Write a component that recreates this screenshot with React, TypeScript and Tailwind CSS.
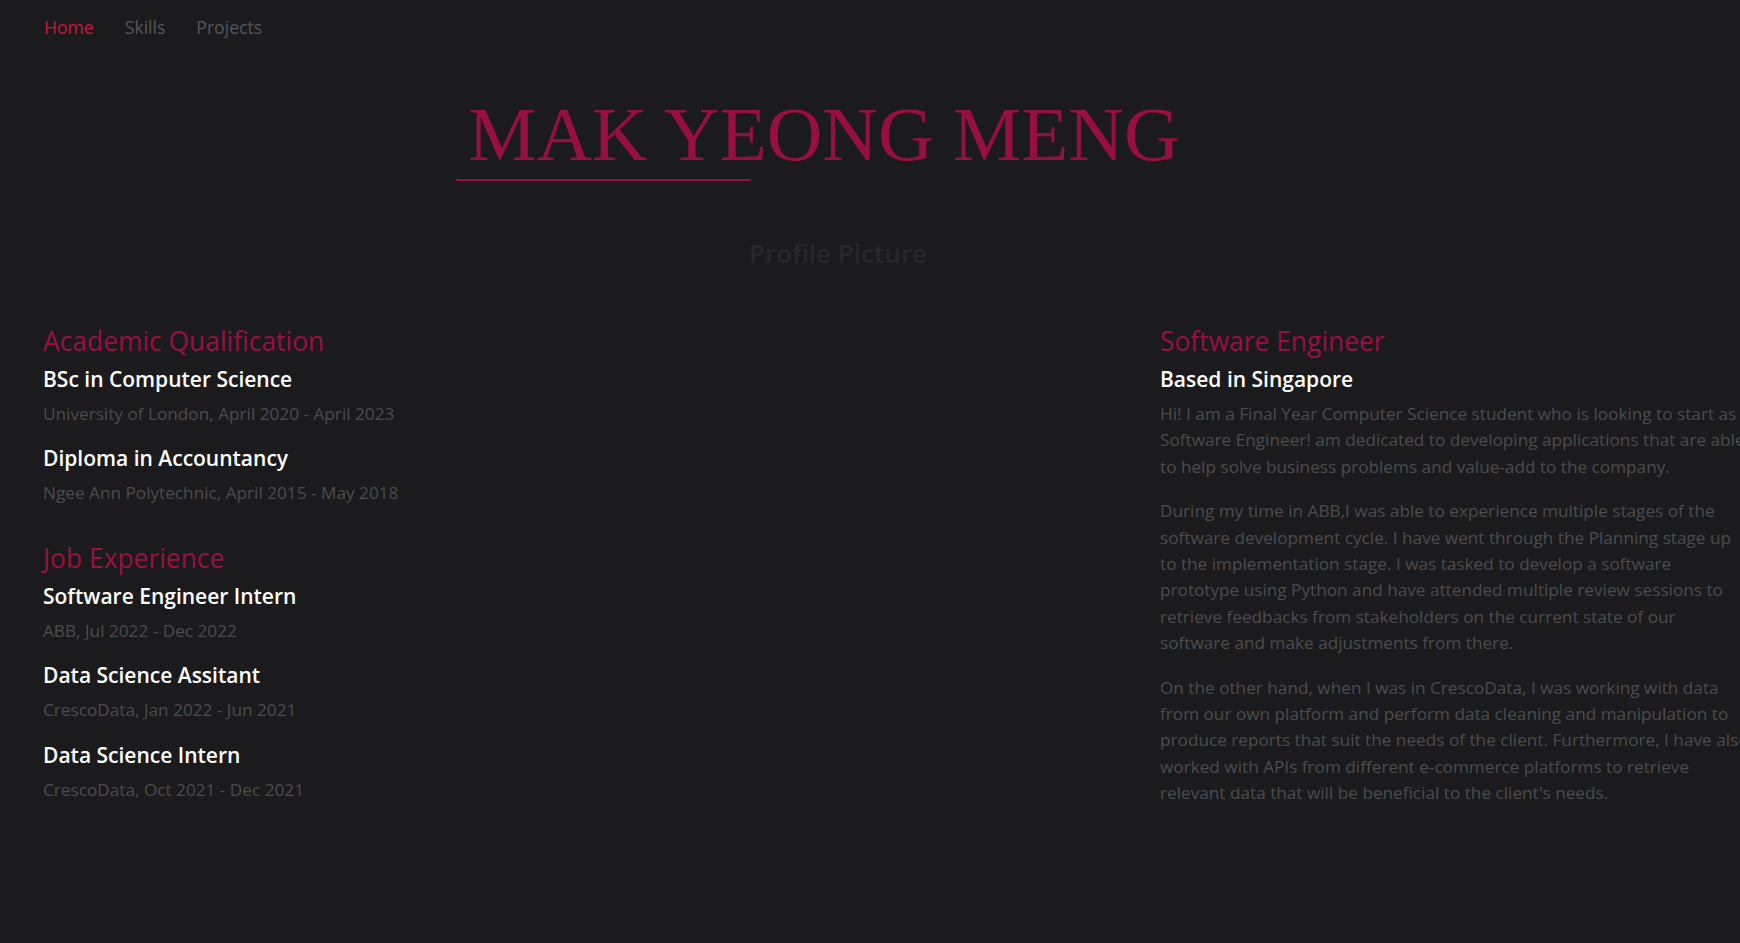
import React from "react";

const sans = "font-['Open_Sans',sans-serif]";

function Item({ title, sub }: { title: string; sub: string }) {
  return (
    <div className="mt-[19px] first:mt-0">
      <div className="text-[21px] leading-[25px] font-semibold text-white">{title}</div>
      <div className="mt-[9px] text-[17.2px] leading-[26.4px] text-[#4b4b4d]">{sub}</div>
    </div>
  );
}

function Heading({ children }: { children: React.ReactNode }) {
  return <h2 className="text-[26.4px] leading-[32px] text-[#9a0f45] font-normal">{children}</h2>;
}

const p1 = [
  "Hi! I am a Final Year Computer Science student who is looking to start as a",
  "Software Engineer! am dedicated to developing applications that are able",
  "to help solve business problems and value-add to the company.",
];
const p2 = [
  "During my time in ABB,I was able to experience multiple stages of the",
  "software development cycle. I have went through the Planning stage up",
  "to the implementation stage. I was tasked to develop a software",
  "prototype using Python and have attended multiple review sessions to",
  "retrieve feedbacks from stakeholders on the current state of our",
  "software and make adjustments from there.",
];
const p3 = [
  "On the other hand, when I was in CrescoData, I was working with data",
  "from our own platform and perform data cleaning and manipulation to",
  "produce reports that suit the needs of the client. Furthermore, I have also",
  "worked with APIs from different e-commerce platforms to retrieve",
  "relevant data that will be beneficial to the client's needs.",
];

function Para({ lines }: { lines: string[] }) {
  return (
    <p className="mt-[18px] first:mt-0 text-[17.2px] leading-[26.4px] text-[#4b4b4d] whitespace-nowrap">
      {lines.map((l, i) => (
        <React.Fragment key={i}>
          {l}
          {i < lines.length - 1 && <br />}
        </React.Fragment>
      ))}
    </p>
  );
}

export default function App() {
  return (
    <div className={`w-[1740px] h-[943px] overflow-hidden bg-[#1b1b1d] ${sans}`}>
      <nav className="h-[54px] flex items-center pl-[44px] gap-[31px] text-[17.6px]">
        <span className="text-[#c8163f]">Home</span>
        <span className="text-[#55555a]">Skills</span>
        <span className="text-[#55555a]">Projects</span>
      </nav>

      <header className="mt-[42px] pl-[456px]">
        <h1 className="pl-[12px] font-['Liberation_Serif',serif] text-[77px] leading-[77px] text-[#970f42] whitespace-nowrap">
          MAK YEONG MENG
        </h1>
        <div className="mt-[6px] h-[2px] w-[295px] bg-[#970f42]" />
      </header>

      <div className="mt-[54px] w-[1676px] text-center text-[26px] leading-[36px] font-semibold text-[#26282c]">
        Profile Picture
      </div>

      <main className="mt-[54px] flex pl-[43px]">
        <div className="w-[1117px] shrink-0">
          <section>
            <Heading>Academic Qualification</Heading>
            <div className="mt-[10px]">
              <Item title="BSc in Computer Science" sub="University of London, April 2020 - April 2023" />
              <Item title="Diploma in Accountancy" sub="Ngee Ann Polytechnic, April 2015 - May 2018" />
            </div>
          </section>
          <section className="mt-[35px]">
            <Heading>Job Experience</Heading>
            <div className="mt-[10px]">
              <Item title="Software Engineer Intern" sub="ABB, Jul 2022 - Dec 2022" />
              <Item title="Data Science Assitant" sub="CrescoData, Jan 2022 - Jun 2021" />
              <Item title="Data Science Intern" sub="CrescoData, Oct 2021 - Dec 2021" />
            </div>
          </section>
        </div>
        <div className="shrink-0 w-[600px]">
          <Heading>Software Engineer</Heading>
          <div className="mt-[10px] text-[21px] leading-[25px] font-semibold text-white">Based in Singapore</div>
          <div className="mt-[9px]">
            <Para lines={p1} />
            <Para lines={p2} />
            <Para lines={p3} />
          </div>
        </div>
      </main>
    </div>
  );
}
